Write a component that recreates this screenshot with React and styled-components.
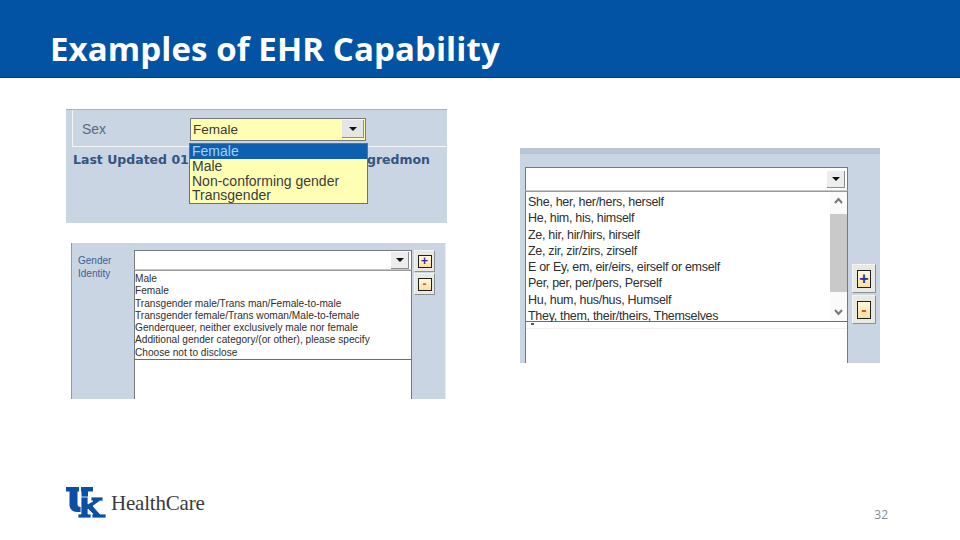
import React from 'react';
import styled, { createGlobalStyle } from 'styled-components';

const GlobalStyle = createGlobalStyle`
  html, body {
    margin: 0;
    padding: 0;
    background: #fff;
  }
`;

const Slide = styled.div`
  width: 960px;
  height: 540px;
  display: flex;
  flex-direction: column;
  overflow: hidden;
  background: #fff;
  font-family: "Liberation Sans", Arial, sans-serif;
`;

const Header = styled.header`
  height: 78px;
  box-sizing: border-box;
  padding: 28px 0 0 50px;
  background: #0353a4;
  border-bottom: 1px solid #0a3a6e;
`;

const Title = styled.h1`
  margin: 0;
  color: #fff;
  font: 700 33px/42px "Open Sans", sans-serif;
  letter-spacing: 0.1px;
`;

const Content = styled.main`
  flex: 1;
  display: flex;
  padding: 31px 0 0 66px;
  gap: 73px;
`;

const LeftColumn = styled.div`
  display: flex;
  flex-direction: column;
  gap: 20px;
`;

const SexPanel = styled.section`
  position: relative;
  width: 381px;
  height: 114px;
  background: #c9d5e3;
  border-top: 1px solid #a9b3bd;
  box-sizing: border-box;
`;

const SexRow = styled.div`
  width: 375px;
  height: 37px;
  margin-left: 6px;
  box-sizing: border-box;
  display: flex;
  align-items: center;
  padding: 2px 0 0 9px;
  border-left: 1px solid #f3f5f8;
  border-bottom: 1px solid #f3f5f8;
`;

const SexLabel = styled.span`
  width: 108px;
  font-size: 14px;
  color: #5b6b7d;
`;

const YellowSelect = styled.div`
  width: 176px;
  height: 23px;
  box-sizing: border-box;
  display: flex;
  align-items: center;
  justify-content: space-between;
  padding: 0 1px 0 2px;
  background: #ffffb4;
  border: 1px solid #77797a;
  font-size: 13.5px;
  color: #3a3a3a;
`;

const ArrowButton = styled.span`
  width: 21px;
  height: 17px;
  display: flex;
  align-items: center;
  justify-content: center;
  background: #e4e6e6;
  border-right: 1px solid #8b8d8d;
  border-bottom: 1px solid #8b8d8d;
`;

const Arrow = styled.i`
  width: 0;
  height: 0;
  border-left: 4px solid transparent;
  border-right: 4px solid transparent;
  border-top: 4px solid #111;
`;

const LastUpdated = styled.div`
  display: flex;
  justify-content: space-between;
  padding: 6px 17px 0 7px;
  font: 700 12.5px/14px "DejaVu Sans", sans-serif;
  color: #33557f;
`;

const SexMenu = styled.ul`
  position: absolute;
  left: 123px;
  top: 33px;
  width: 179px;
  height: 61px;
  margin: 0;
  padding: 0;
  box-sizing: border-box;
  list-style: none;
  background: #ffffb4;
  border: 1px solid #6d6f72;
  font-size: 14px;
  line-height: 14.8px;
  color: #3c3c3c;
`;

const SexOption = styled.li`
  padding-left: 2px;
  background: ${props => (props.$active ? '#0f5fb0' : 'transparent')};
  color: ${props => (props.$active ? '#9fd2f5' : 'inherit')};
`;

const GenderPanel = styled.section`
  width: 375px;
  height: 156px;
  margin-left: 5px;
  box-sizing: border-box;
  display: flex;
  padding-top: 7px;
  background: #c9d5e3;
  border-left: 1px solid #8f9aa6;
  border-right: 1px solid #e8edf3;
  overflow: hidden;
`;

const GenderLabel = styled.div`
  width: 62px;
  padding: 4px 0 0 6px;
  box-sizing: border-box;
  font-size: 10px;
  line-height: 13px;
  color: #3d6190;
`;

const ListColumn = styled.div`
  width: ${props => props.$width}px;
  display: flex;
  flex-direction: column;
`;

const ComboBox = styled.div`
  height: ${props => props.$height}px;
  box-sizing: border-box;
  display: flex;
  align-items: center;
  justify-content: flex-end;
  padding-right: 2px;
  background: #fff;
  border: 1px solid #77797a;
  border-bottom-color: #c8c8c8;
`;

const SmallArrowButton = styled(ArrowButton)`
  width: 17px;
  height: 16px;
  background: #eceded;
`;

const OptionList = styled.ul`
  margin: 0;
  padding: 2px 0 0;
  box-sizing: border-box;
  height: ${props => props.$height}px;
  list-style: none;
  background: #fff;
  border: 1px solid #77797a;
  border-top-color: #999;
  border-bottom: 1px solid #6b6d70;
  font-size: 10.15px;
  line-height: 12.3px;
  color: #2e2e2e;
`;

const BlankList = styled.div`
  flex: 1;
  position: relative;
  background: #fff;
  border-left: 1px solid #77797a;
  border-right: 1px solid #77797a;
`;

/* bit of a clipped row left under the open list */
const ClippedRow = styled.span`
  position: absolute;
  top: 0;
  left: 0;
  right: 0;
  height: 6px;
  border-bottom: 1px solid #f0f0f0;

  &::before {
    content: '';
    position: absolute;
    top: 1px;
    left: 5px;
    width: 3px;
    height: 2px;
    background: #555;
  }
`;

const ButtonStack = styled.div`
  display: flex;
  flex-direction: column;
  gap: ${props => props.$gap}px;
  margin-left: ${props => props.$left}px;
`;

const SquareButton = styled.div`
  width: ${props => props.$width}px;
  height: ${props => props.$height}px;
  box-sizing: border-box;
  display: flex;
  align-items: center;
  justify-content: center;
  background: #e9e9e4;
  border: 1px solid #f4f4f4;
  border-right-color: #8a8f95;
  border-bottom-color: #8a8f95;
`;

const ButtonFace = styled.span`
  width: ${props => props.$width}px;
  height: ${props => props.$height}px;
  box-sizing: border-box;
  display: flex;
  align-items: center;
  justify-content: center;
  background: linear-gradient(#fff8dc, #fbdfa0);
  border: 1px solid #1f1f1f;
  font: 700 ${props => props.$font}px/1 "Liberation Sans", sans-serif;
  color: ${props => props.$color};
`;

const PronounPanel = styled.section`
  position: relative;
  width: 360px;
  height: 215px;
  margin-top: 39px;
  box-sizing: border-box;
  padding: 13px 0 0 5px;
  background: #c9d5e3;
  border-top: 6px solid #b8c5d3;
  display: flex;
  overflow: hidden;
`;

const PronounList = styled(OptionList)`
  position: relative;
  padding: 2px 0 0 2px;
  font-size: 12.5px;
  line-height: 16.3px;
  letter-spacing: -0.3px;
`;

const Scrollbar = styled.div`
  position: absolute;
  top: 0;
  right: 0;
  bottom: 0;
  width: 17px;
  display: flex;
  flex-direction: column;
  align-items: center;
  justify-content: space-between;
  padding: 5px 0;
  box-sizing: border-box;
  background: #fafafa;
`;

const ScrollThumb = styled.span`
  position: absolute;
  top: 22px;
  left: 0;
  width: 17px;
  height: 78px;
  background: #c9c9c9;
`;

const Chevron = styled.svg`
  width: 9px;
  height: 7px;
  fill: none;
  stroke: #777;
  stroke-width: 2;
`;

const SideButtons = styled(ButtonStack)`
  margin-top: 97px;
`;

const Footer = styled.footer`
  height: 60px;
  box-sizing: border-box;
  display: flex;
  align-items: flex-start;
  justify-content: space-between;
  padding: 7px 72px 0 66px;
`;

const Brand = styled.div`
  display: flex;
  align-items: center;
  gap: 5px;
`;

const BrandName = styled.span`
  font: 400 21px/24px "Liberation Serif", serif;
  color: #3a3a3a;
  letter-spacing: -0.2px;
`;

const PageNumber = styled.span`
  margin-top: 21px;
  font: 400 12px/14px "Open Sans", sans-serif;
  color: #8a8a8a;
`;

function Logo() {
  return (
    <svg width="40" height="31" viewBox="0 0 40 31">
      <path fill="#0a4fa3" d="M0 0h13v4.500h-1.500v12.500c0 2 1 3 3 3h1V4.500H15V0h12v4.500h-5V20c0 3-3 5-6 5h-5c-4 0-7.500-3-7.500-7V4.500H0z" />
      <path
        fill="#0a4fa3"
        stroke="#fff"
        strokeWidth="0.8"
        d="M15 10h7v7l5-3h-2v-4h12v4h-3l-7 5 7 8h6v4H26v-4h1l-5-5v5h3v4H12v-4h3z"
      />
    </svg>
  );
}

const genderOptions = [
  'Male',
  'Female',
  'Transgender male/Trans man/Female-to-male',
  'Transgender female/Trans woman/Male-to-female',
  'Genderqueer, neither exclusively male nor female',
  'Additional gender category/(or other), please specify',
  'Choose not to disclose',
];

const pronounOptions = [
  'She, her, her/hers, herself',
  'He, him, his, himself',
  'Ze, hir, hir/hirs, hirself',
  'Ze, zir, zir/zirs, zirself',
  'E or Ey, em, eir/eirs, eirself or emself',
  'Per, per, per/pers, Perself',
  'Hu, hum, hus/hus, Humself',
  'They, them, their/theirs, Themselves',
];

export default function App() {
  return (
    <>
      <GlobalStyle />
      <Slide>
        <Header>
          <Title>Examples of EHR Capability</Title>
        </Header>
        <Content>
          <LeftColumn>
            <SexPanel>
              <SexRow>
                <SexLabel>Sex</SexLabel>
                <YellowSelect>
                  Female
                  <ArrowButton><Arrow /></ArrowButton>
                </YellowSelect>
              </SexRow>
              <LastUpdated>
                <span>Last Updated 01</span>
                <span>gredmon</span>
              </LastUpdated>
              <SexMenu>
                <SexOption $active>Female</SexOption>
                <SexOption>Male</SexOption>
                <SexOption>Non-conforming gender</SexOption>
                <SexOption>Transgender</SexOption>
              </SexMenu>
            </SexPanel>
            <GenderPanel>
              <GenderLabel>Gender<br />Identity</GenderLabel>
              <ListColumn $width={278}>
                <ComboBox $height={20}>
                  <SmallArrowButton><Arrow /></SmallArrowButton>
                </ComboBox>
                <OptionList $height={90}>
                  {genderOptions.map(option => <li key={option}>{option}</li>)}
                </OptionList>
                <BlankList />
              </ListColumn>
              <ButtonStack $gap={1} $left={2}>
                <SquareButton $width={21} $height={22}>
                  <ButtonFace $width={14} $height={13} $font={12} $color="#2b2a9a">+</ButtonFace>
                </SquareButton>
                <SquareButton $width={21} $height={22}>
                  <ButtonFace $width={14} $height={13} $font={12} $color="#d2541a">-</ButtonFace>
                </SquareButton>
              </ButtonStack>
            </GenderPanel>
          </LeftColumn>
          <PronounPanel>
            <ListColumn $width={323}>
              <ComboBox $height={24}>
                <SmallArrowButton><Arrow /></SmallArrowButton>
              </ComboBox>
              <PronounList $height={131}>
                {pronounOptions.map(option => <li key={option}>{option}</li>)}
                <Scrollbar>
                  <ScrollThumb />
                  <Chevron viewBox="0 0 9 7"><path d="M1 6l3.500-4L8 6" /></Chevron>
                  <Chevron viewBox="0 0 9 7"><path d="M1 1l3.500 4L8 1" /></Chevron>
                </Scrollbar>
              </PronounList>
              <BlankList><ClippedRow /></BlankList>
            </ListColumn>
            <SideButtons $gap={2} $left={4}>
              <SquareButton $width={24} $height={29}>
                <ButtonFace $width={14} $height={18} $font={16} $color="#2b2a9a">+</ButtonFace>
              </SquareButton>
              <SquareButton $width={24} $height={29}>
                <ButtonFace $width={14} $height={18} $font={16} $color="#d2541a">-</ButtonFace>
              </SquareButton>
            </SideButtons>
          </PronounPanel>
        </Content>
        <Footer>
          <Brand>
            <Logo />
            <BrandName>HealthCare</BrandName>
          </Brand>
          <PageNumber>32</PageNumber>
        </Footer>
      </Slide>
    </>
  );
}
